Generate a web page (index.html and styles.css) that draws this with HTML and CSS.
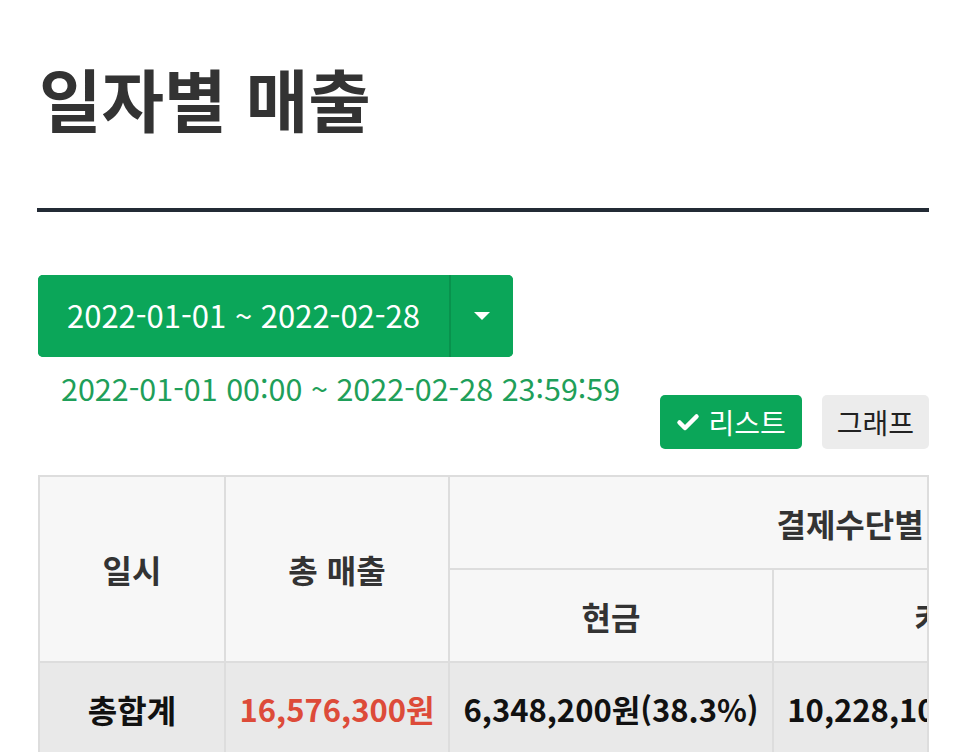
FILE: index.html
```html
<!DOCTYPE html>
<html lang="ko">
<head>
  <meta charset="UTF-8">
  <title>일자별 매출</title>
  <meta name="viewport" content="width=device-width, initial-scale=1.0">
  <link rel="stylesheet" href="styles.css">
</head>
<body>

<div class="page">
  <h1 class="page-title">일자별 매출</h1>

  <div class="date-picker">
    <button class="date-button">2022-01-01 ~ 2022-02-28</button>
    <button class="date-caret"><span class="caret"></span></button>
  </div>

  <div class="filter-row">
    <p class="date-range">2022-01-01 00:00 ~ 2022-02-28 23:59:59</p>
    <div class="view-toggle">
      <button class="toggle-button active">
        <svg class="check" viewBox="0 0 24 24"><path d="M3.5 12.5l5.5 5.5L20.5 6.5" fill="none" stroke="#fff" stroke-width="4.5" stroke-linecap="round" stroke-linejoin="round"/></svg>리스트
      </button>
      <button class="toggle-button">그래프</button>
    </div>
  </div>

  <div class="table-wrap">
    <table class="sales-table">
      <colgroup>
        <col class="col-date">
        <col class="col-total">
        <col class="col-cash">
        <col class="col-card">
        <col class="col-etc">
      </colgroup>
      <thead>
        <tr>
          <th rowspan="2">일시</th>
          <th rowspan="2">총 매출</th>
          <th colspan="3">결제수단별 매출</th>
        </tr>
        <tr>
          <th>현금</th>
          <th>카드</th>
          <th>기타</th>
        </tr>
      </thead>
      <tbody>
        <tr class="sum-row">
          <td class="sum-label">총합계</td>
          <td class="amount-total">16,576,300원</td>
          <td>6,348,200원(38.3%)</td>
          <td>10,228,100원(61.7%)</td>
          <td>0원(0%)</td>
        </tr>
      </tbody>
    </table>
  </div>
</div>

</body>
</html>
```

FILE: styles.css
```css
body {
  margin: 0;
  background: #ffffff;
  color: #333333;
  font-family: "Noto Sans CJK KR", "Noto Sans", sans-serif;
}
.page {
  padding: 0 37px;
}
.page-title {
  margin: 0;
  padding: 47px 0 59px 2px;
  font-size: 68px;
  line-height: 1.5;
  font-weight: 700;
  color: #333333;
  border-bottom: 4px solid #232b35;
}
.date-picker {
  display: flex;
  width: 475px;
  margin-top: 63px;
  margin-left: 1px;
  border-radius: 5px;
  overflow: hidden;
  background: #0ba659;
}
.date-picker button {
  border: none;
  background: #0ba659;
  color: #ffffff;
  font-family: inherit;
  cursor: pointer;
}
.date-button {
  flex: 1;
  height: 82px;
  font-size: 31px;
  padding: 0 0 4px;
  border-right: 2px solid #09924d !important;
}
.date-caret {
  width: 62px;
  display: flex;
  align-items: center;
  justify-content: center;
}
.caret {
  width: 0;
  height: 0;
  border-left: 8px solid transparent;
  border-right: 8px solid transparent;
  border-top: 8px solid #ffffff;
}
.filter-row {
  display: flex;
  justify-content: space-between;
  align-items: flex-start;
}
.date-range {
  margin: 11px 0 0 24px;
  font-size: 30.5px;
  line-height: 40px;
  color: #1f9f5a;
}
.view-toggle {
  display: flex;
  gap: 20px;
  margin-top: 38px;
}
.toggle-button {
  height: 54px;
  padding: 0 15px;
  border: none;
  border-radius: 5px;
  background: #ececec;
  color: #222222;
  font-family: inherit;
  font-size: 28px;
  display: flex;
  align-items: center;
  gap: 8px;
}
.toggle-button.active {
  background: #0ba659;
  color: #ffffff;
  padding: 0 16px 0 16px;
}
.check {
  width: 24px;
  height: 24px;
}
.table-wrap {
  margin-top: 26px;
  margin-left: 1px;
  border: 2px solid #dddddd;
  border-bottom: none;
  overflow: hidden;
}
.sales-table {
  width: 1280px;
  border-collapse: collapse;
  table-layout: fixed;
  margin: -2px;
}
.sales-table th,
.sales-table td {
  border: 2px solid #dddddd;
  height: 91px;
  padding: 0;
  text-align: center;
  font-size: 31px;
  font-weight: 700;
  white-space: nowrap;
}
.sales-table th {
  background: #f7f7f7;
  color: #333333;
  font-size: 32px;
}
.col-date { width: 186px; }
.col-total { width: 224px; }
.col-cash { width: 324px; }
.col-card { width: 342px; }
.col-etc { width: 204px; }
.sum-row td {
  background: #e9e9e9;
  color: #111111;
}
.sum-row .sum-label {
  font-size: 32px;
}
.sum-row .amount-total {
  color: #dd4b39;
}
```
